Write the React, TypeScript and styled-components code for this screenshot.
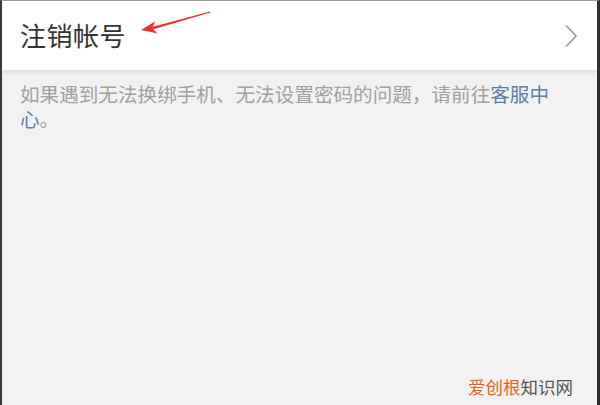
import React from "react";
import styled, { createGlobalStyle } from "styled-components";

const GlobalStyle = createGlobalStyle`
  html, body {
    margin: 0;
    padding: 0;
    background: #f2f2f2;
  }
  body {
    font-family: "Noto Sans CJK SC", "Noto Sans", sans-serif;
  }
`;

const Frame = styled.div`
  position: relative;
  width: 600px;
  height: 405px;
  box-sizing: border-box;
  display: flex;
  flex-direction: column;
  background: #f2f2f2;
  border-top: 1px solid #9a9a9a;
  border-left: 2px solid #3a3a3a;
  border-right: 3px solid #2e2e2e;
  overflow: hidden;
`;

const Header = styled.div`
  height: 69px;
  flex: none;
  display: flex;
  align-items: center;
  justify-content: space-between;
  padding: 0 19px 0 18px;
  background: #fff;
  box-shadow: 0 2px 4px rgba(0, 0, 0, 0.08);
  border-bottom: 1px solid #e2e2e2;
`;

const Title = styled.span`
  font-size: 26px;
  color: #333;
  letter-spacing: 0.5px;
  line-height: 1;
  margin-top: -2px;
`;

const Body = styled.div`
  padding: 10px 20px 0 18px;
`;

const Note = styled.p`
  margin: 0;
  font-size: 19.6px;
  line-height: 25px;
  color: #a0a0a0;
`;

const Link = styled.span`
  color: #5a80a8;
`;

const Watermark = styled.div`
  margin-top: auto;
  align-self: flex-end;
  padding: 0 24px 6px 0;
  font-size: 17.5px;
  line-height: 24px;
  color: #555;
`;

const Orange = styled.span`
  color: #e2622a;
`;

const Arrow = styled.svg`
  position: absolute;
  left: 130px;
  top: 4px;
`;

const Chevron = () => (
  <svg width="14" height="24" viewBox="0 0 14 24">
    <path d="M2 1.5 L12 12 L2 22.5" fill="none" stroke="#9a9a9a" strokeWidth="1.6" />
  </svg>
);

export default function App() {
  return (
    <>
      <GlobalStyle />
      <Frame>
        <Header>
          <Title>注销帐号</Title>
          <Chevron />
        </Header>
        <Body>
          <Note>
            如果遇到无法换绑手机、无法设置密码的问题，请前往<Link>客服中心</Link>。
          </Note>
        </Body>
        <Watermark>
          <Orange>爱创根</Orange>知识网
        </Watermark>
        <Arrow width="90" height="35" viewBox="0 0 90 35">
          <path d="M78 6.5 L20 22 L20.6 24.4 L78.4 7.6 Z" fill="#f0302a" />
          <path d="M9 25 L23 16.5 L20.3 23.2 L25.5 28.5 Z" fill="#f0302a" />
        </Arrow>
      </Frame>
    </>
  );
}
